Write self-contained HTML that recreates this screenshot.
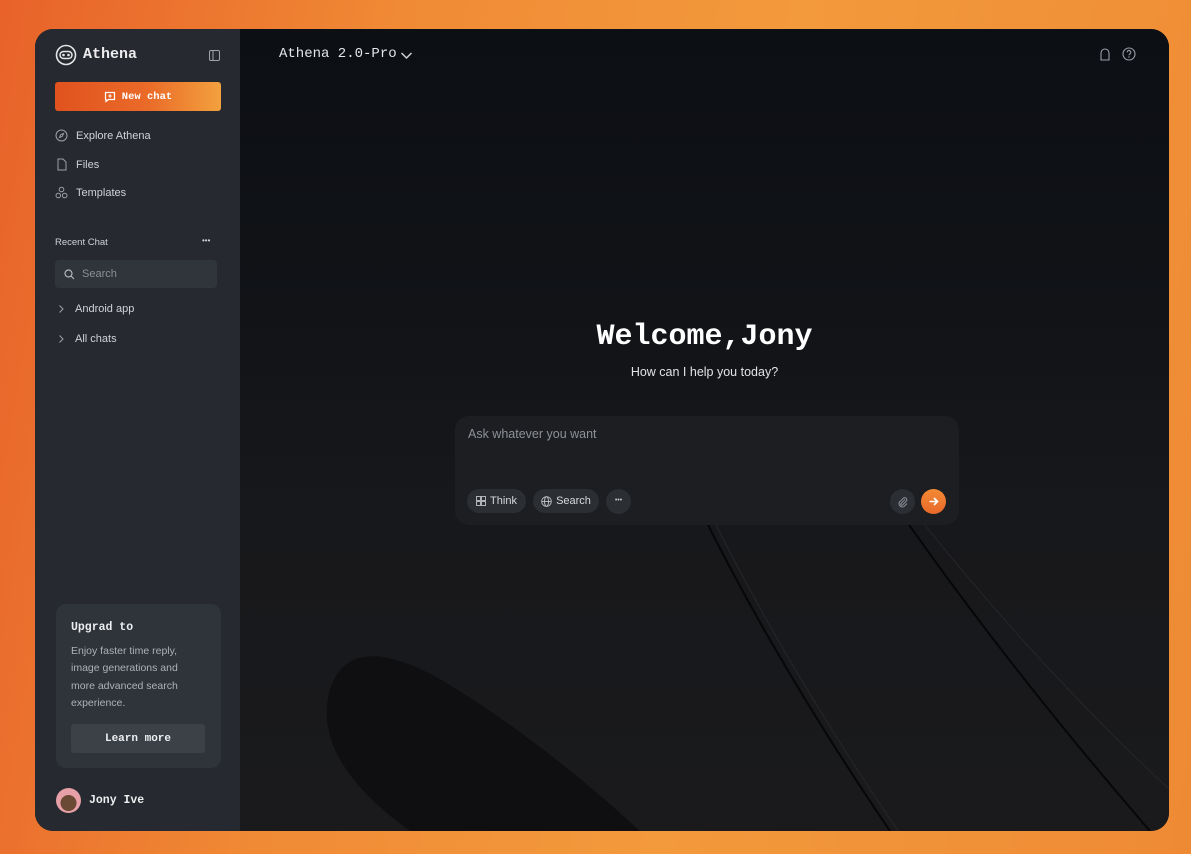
<!DOCTYPE html>
<html><head><meta charset="utf-8"><style>
*{box-sizing:border-box;margin:0;padding:0}
body{width:1191px;height:854px;overflow:hidden;background:linear-gradient(100deg,#e8622a 0%,#f08a35 30%,#f39a3c 60%,#ee8a34 100%);font-family:"Liberation Sans",sans-serif;position:relative}
.app{position:absolute;left:35px;top:29px;width:1134px;height:802px;border-radius:18px;overflow:hidden;background:#0d1015}
.side{position:absolute;left:0;top:0;width:205px;height:100%;background:#262a30;color:#d4d6da}
.mono{font-family:"Liberation Mono",monospace}
.main{position:absolute;left:205px;top:0;right:0;bottom:0;background:linear-gradient(180deg,#0c0f14 0%,#111317 35%,#17181b 60%,#1a1a1c 100%)}
.abs{position:absolute}
.nav{position:absolute;left:20px;font-size:11px;color:#cfd2d6;display:flex;align-items:center;gap:8px}
svg{display:block}
</style></head><body>
<div class="app">
<div class="side">
  <svg class="abs" style="left:20px;top:15px" width="22" height="22" viewBox="0 0 22 22"><circle cx="11" cy="11" r="9.5" fill="none" stroke="#e5e6e8" stroke-width="1.6"/><rect x="5" y="7.5" width="12" height="7" rx="3.5" fill="none" stroke="#e5e6e8" stroke-width="1.5"/><circle cx="8.5" cy="11" r="1.3" fill="#e5e6e8"/><circle cx="13.5" cy="11" r="1.3" fill="#e5e6e8"/></svg>
  <div class="abs mono" style="left:48px;top:17px;font-size:15px;font-weight:bold;color:#ececee">Athena</div>
  <svg class="abs" style="left:174px;top:21px" width="11" height="11" viewBox="0 0 11 11"><rect x=".5" y=".5" width="10" height="10" rx="1.5" fill="none" stroke="#a0a4aa"/><line x1="4" y1=".5" x2="4" y2="10.5" stroke="#a0a4aa"/></svg>
  <div class="abs" style="left:20px;top:53px;width:166px;height:29px;border-radius:3px;background:linear-gradient(90deg,#e0521f,#ea6a28 55%,#f3a13e);display:flex;align-items:center;justify-content:center;gap:6px;color:#fff">
    <svg width="12" height="12" viewBox="0 0 12 12"><path d="M1.5 1.5h9v7h-6l-2.5 2v-2h-.5z" fill="none" stroke="#fff" stroke-width="1.2"/><path d="M6 3.3v3.4M4.3 5h3.4" stroke="#fff" stroke-width="1.1"/></svg>
    <span class="mono" style="font-size:10.5px;font-weight:bold">New chat</span></div>
  <div class="nav" style="top:100px"><svg width="13" height="13" viewBox="0 0 13 13"><circle cx="6.5" cy="6.5" r="5.5" fill="none" stroke="#9ca0a6"/><path d="M8.5 4.5L7.3 7.3 4.5 8.5 5.7 5.7z" fill="none" stroke="#9ca0a6"/></svg>Explore Athena</div>
  <div class="nav" style="top:129px"><svg width="13" height="13" viewBox="0 0 13 13"><path d="M3 1h5l3 3v8H3z" fill="none" stroke="#9ca0a6"/></svg>Files</div>
  <div class="nav" style="top:157px"><svg width="13" height="13" viewBox="0 0 13 13"><circle cx="6.5" cy="3.5" r="2.3" fill="none" stroke="#9ca0a6"/><circle cx="3.3" cy="9.5" r="2.3" fill="none" stroke="#9ca0a6"/><circle cx="9.7" cy="9.5" r="2.3" fill="none" stroke="#9ca0a6"/></svg>Templates</div>
  <div class="abs" style="left:20px;top:208px;font-size:9.5px;color:#cfd2d6">Recent Chat</div>
  <div class="abs" style="left:167px;top:207px;font-size:8px;color:#cfd2d6">•••</div>
  <div class="abs" style="left:20px;top:231px;width:162px;height:28px;border-radius:4px;background:#30353c;display:flex;align-items:center;padding-left:9px;gap:7px;color:#8a8f96;font-size:11px">
    <svg width="11" height="11" viewBox="0 0 11 11"><circle cx="4.5" cy="4.5" r="3.5" fill="none" stroke="#b0b4ba" stroke-width="1.2"/><path d="M7 7l3 3" stroke="#b0b4ba" stroke-width="1.2"/></svg>Search</div>
  <div class="nav" style="top:274px"><svg width="12" height="12" viewBox="0 0 12 12"><path d="M4.5 2.5l3.5 3.5-3.5 3.5" fill="none" stroke="#9ca0a6"/></svg>Android app</div>
  <div class="nav" style="top:304px"><svg width="12" height="12" viewBox="0 0 12 12"><path d="M4.5 2.5l3.5 3.5-3.5 3.5" fill="none" stroke="#9ca0a6"/></svg>All chats</div>
  <div class="abs" style="left:21px;top:575px;width:165px;height:164px;border-radius:10px;background:#2f333a">
    <div class="abs mono" style="left:15px;top:17px;font-size:11.5px;font-weight:bold;color:#eceef0">Upgrad to</div>
    <div class="abs" style="left:15px;top:39px;width:128px;font-size:10.5px;line-height:17.3px;color:#aeb2b8">Enjoy faster time reply, image generations and more advanced search experience.</div>
    <div class="abs mono" style="left:15px;top:120px;width:134px;height:29px;border-radius:3px;background:#3c4148;color:#eceef0;font-size:11px;font-weight:bold;display:flex;align-items:center;justify-content:center">Learn more</div>
  </div>
  <div class="abs" style="left:21px;top:759px;width:25px;height:25px;border-radius:50%;background:radial-gradient(circle at 50% 60%,#6b4a35 0 40%,#e8a0a8 42%)"></div>
  <div class="abs mono" style="left:54px;top:765px;font-size:11.5px;font-weight:bold;color:#eceef0">Jony Ive</div>
</div>
<div class="main">
  <svg class="abs" style="left:0;top:0" width="929" height="802" viewBox="0 0 929 802">
    <path d="M465 490 Q540 640 650 802" stroke="#060708" stroke-width="2" fill="none"/>
    <path d="M473 490 Q548 640 658 802" stroke="#26272a" stroke-width="1" fill="none"/>
    <path d="M665 490 Q770 640 910 802" stroke="#060708" stroke-width="2" fill="none"/>
    <path d="M680 490 Q800 640 929 760" stroke="#26272a" stroke-width="1" fill="none"/>
    <path d="M90 660 Q110 600 200 650 Q300 710 400 802 L170 802 Q70 730 90 660z" fill="#0c0c0d" opacity=".7"/>
  </svg>
  <div class="abs mono" style="left:39px;top:17px;font-size:14px;color:#e4e5e7">Athena 2.0-Pro</div>
  <svg class="abs" style="left:160px;top:22px" width="13" height="9" viewBox="0 0 13 9"><path d="M1.5 2l5 5 5-5" fill="none" stroke="#d0d2d5" stroke-width="1.5"/></svg>
  <svg class="abs" style="left:859px;top:19px" width="12" height="13" viewBox="0 0 12 13"><path d="M2 12V5a4 4 0 018 0v7z" fill="none" stroke="#9ca0a6" stroke-width="1.1"/></svg>
  <svg class="abs" style="left:882px;top:18px" width="14" height="14" viewBox="0 0 14 14"><circle cx="7" cy="7" r="6" fill="none" stroke="#9ca0a6" stroke-width="1.1"/><path d="M5.2 5.3a1.8 1.8 0 113 1.3c-.8.5-1.2.8-1.2 1.6" fill="none" stroke="#9ca0a6" stroke-width="1.1"/><circle cx="7" cy="10" r=".7" fill="#9ca0a6"/></svg>
  <div class="abs mono" style="left:0;width:929px;top:291px;text-align:center;font-size:30px;font-weight:bold;color:#fff">Welcome,Jony</div>
  <div class="abs" style="left:0;width:929px;top:336px;text-align:center;font-size:12.5px;color:#e2e3e5">How can I help you today?</div>
  <div class="abs" style="left:215px;top:387px;width:504px;height:109px;border-radius:14px;background:#1c1e22">
    <div class="abs" style="left:13px;top:11px;font-size:12.5px;color:#8d9198">Ask whatever you want</div>
    <div class="abs" style="left:12px;top:73px;width:59px;height:24px;border-radius:12px;background:#2b2e33;display:flex;align-items:center;justify-content:center;gap:4px;font-size:11px;color:#d7d9dc">
      <svg width="10" height="10" viewBox="0 0 10 10"><rect x=".5" y=".5" width="4" height="4" fill="none" stroke="#c0c3c7" stroke-width=".9"/><rect x="5.5" y=".5" width="4" height="4" fill="none" stroke="#c0c3c7" stroke-width=".9"/><rect x=".5" y="5.5" width="4" height="4" fill="none" stroke="#c0c3c7" stroke-width=".9"/><rect x="5.5" y="5.5" width="4" height="4" fill="none" stroke="#c0c3c7" stroke-width=".9"/></svg>Think</div>
    <div class="abs" style="left:78px;top:73px;width:66px;height:24px;border-radius:12px;background:#2b2e33;display:flex;align-items:center;justify-content:center;gap:4px;font-size:11px;color:#d7d9dc">
      <svg width="11" height="11" viewBox="0 0 11 11"><circle cx="5.5" cy="5.5" r="4.8" fill="none" stroke="#c0c3c7" stroke-width=".9"/><ellipse cx="5.5" cy="5.5" rx="2" ry="4.8" fill="none" stroke="#c0c3c7" stroke-width=".9"/><path d="M.7 5.5h9.6" stroke="#c0c3c7" stroke-width=".9"/></svg>Search</div>
    <div class="abs" style="left:151px;top:73px;width:25px;height:25px;border-radius:50%;background:#2b2e33;color:#c0c3c7;font-size:7px;text-align:center;line-height:24px">•••</div>
    <div class="abs" style="left:435px;top:73px;width:25px;height:25px;border-radius:50%;background:#2b2e33;display:flex;align-items:center;justify-content:center">
      <svg width="12" height="12" viewBox="0 0 12 12"><path d="M8 3.5L4 7.5a1 1 0 001.5 1.5L9.5 5a2.2 2.2 0 00-3-3L2.5 6a3.3 3.3 0 004.5 4.5L10 7.5" fill="none" stroke="#8d9198" stroke-width="1"/></svg></div>
    <div class="abs" style="left:466px;top:73px;width:25px;height:25px;border-radius:50%;background:linear-gradient(180deg,#f28a35,#e9692a);display:flex;align-items:center;justify-content:center">
      <svg width="11" height="11" viewBox="0 0 11 11"><path d="M1.5 5.5h8M6 2l3.5 3.5L6 9" fill="none" stroke="#fff" stroke-width="1.6"/></svg></div>
  </div>
</div>
</div>
</body></html>
